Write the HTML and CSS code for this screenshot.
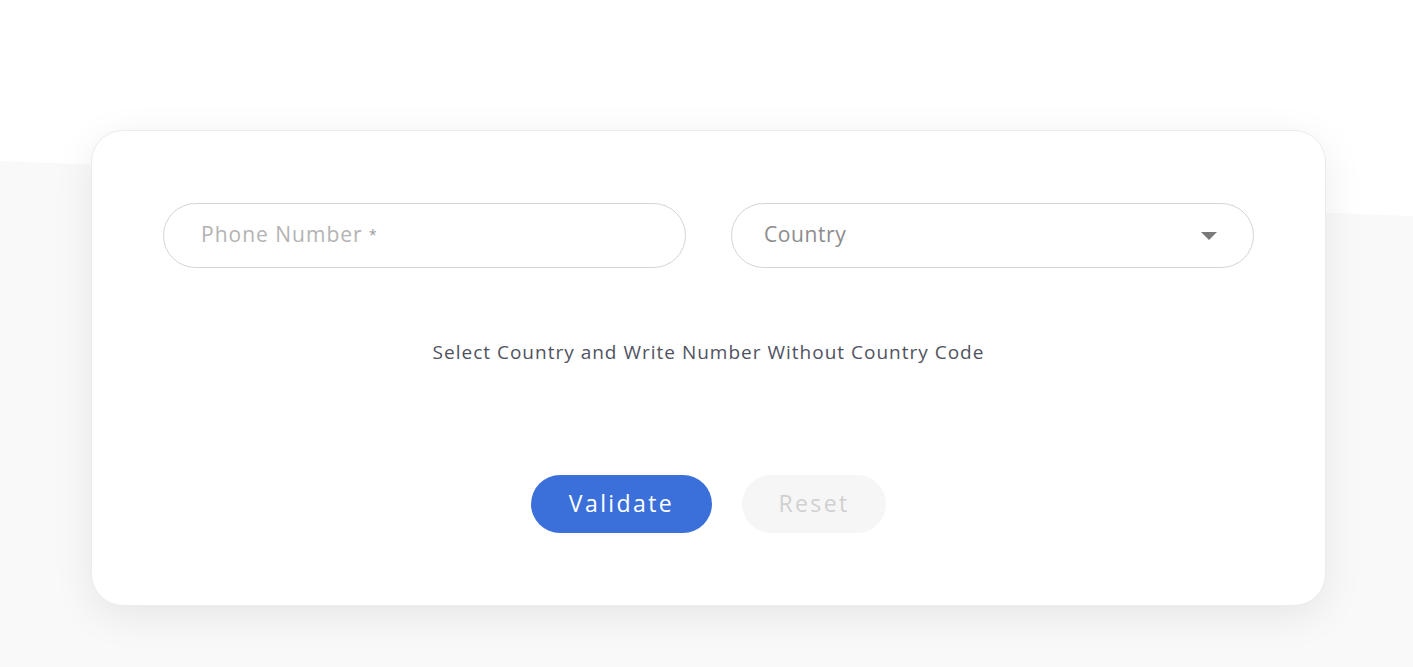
FILE: index.html
```html
<!DOCTYPE html>
<html lang="en">
<head>
<meta charset="utf-8">
<title>Phone Validator</title>
<link rel="stylesheet" href="styles.css">
</head>
<body>
<main class="page">
  <section class="card">
    <div class="fields">
      <label class="field">
        <span class="placeholder">Phone Number <span class="req">*</span></span>
      </label>
      <div class="field select">
        <span class="placeholder dark">Country</span>
        <svg class="caret" width="16" height="8" viewBox="0 0 16 8"><path d="M0 0H16L8 8Z" fill="#7a7a7a"/></svg>
      </div>
    </div>
    <p class="hint">Select Country and Write Number Without Country Code</p>
    <div class="actions">
      <button class="btn primary">Validate</button>
      <button class="btn ghost">Reset</button>
    </div>
  </section>
</main>
</body>
</html>
```
FILE: styles.css
```css
* { box-sizing: border-box; }
html, body { margin: 0; height: 100%; }
body {
  background: #fff;
  font-family: "Open Sans", "Noto Sans", sans-serif;
  overflow: hidden;
}
.page {
  position: relative;
  min-height: 667px;
  padding: 130px 0 0 91px;
}
.page::before {
  content: "";
  position: absolute;
  inset: 0;
  background: #f9f9f9;
  clip-path: polygon(0 161px, 100% 216px, 100% 100%, 0 100%);
  z-index: 0;
}
.card {
  position: relative;
  z-index: 1;
  width: 1235px;
  height: 476px;
  background: #fff;
  border: 1px solid #ececec;
  border-radius: 32px;
  box-shadow: 0 10px 40px rgba(0, 0, 0, 0.08);
  padding: 72px 71px 0 71px;
}
.fields {
  display: grid;
  grid-template-columns: 1fr 1fr;
  gap: 45px;
}
.field {
  min-width: 0;
  height: 65px;
  border: 1px solid #d4d4d4;
  border-radius: 33px;
  display: flex;
  align-items: center;
  padding: 0 37px 3px;
}
.select { padding: 0 36px 3px 32px; justify-content: space-between; }
.placeholder {
  font-size: 21px;
  letter-spacing: 1px;
  color: #b3b3b3;
}
.placeholder.dark { color: #8c8c8c; letter-spacing: 0.6px; }
.req { font-size: 14px; color: #9a9a9a; vertical-align: 2px; letter-spacing: 0; }
.caret { margin-top: 3px; }
.hint {
  margin: 69px 0 0;
  text-align: center;
  font-size: 19px;
  letter-spacing: 1px;
  color: #50535f;
  line-height: 30px;
}
.actions {
  display: flex;
  justify-content: center;
  gap: 30px;
  margin-top: 108px;
}
.btn {
  height: 58px;
  border: none;
  border-radius: 29px;
  font-family: inherit;
  font-size: 23px;
  letter-spacing: 2.4px;
  padding: 0 0 2px;
}
.primary { width: 181px; background: #3b70da; color: #fff; }
.ghost { width: 144px; background: #f6f6f6; color: #d0d0d0; }
```
